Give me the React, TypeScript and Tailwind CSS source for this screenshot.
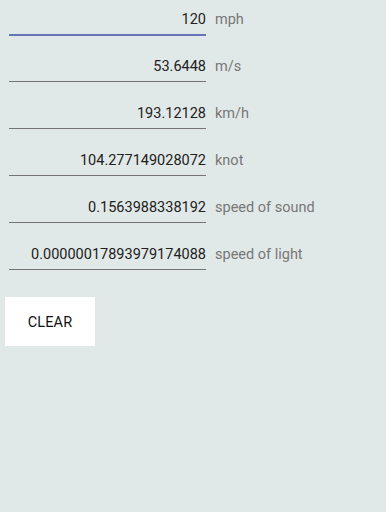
import { useState } from "react";

const units = [
    { value: "120", label: "mph", active: true },
    { value: "53.6448", label: "m/s" },
    { value: "193.12128", label: "km/h" },
    { value: "104.277149028072", label: "knot" },
    { value: "0.1563988338192", label: "speed of sound" },
    { value: "0.00000017893979174088", label: "speed of light" },
];

export default function App() {
    const [rows, setRows] = useState(units);

    return (
        <div
            className="min-h-[512px] w-full bg-[#e1e9e8] pt-[10px]"
            style={{ fontFamily: "Roboto, 'Liberation Sans', sans-serif" }}
        >
            {rows.map((row) => (
                <div key={row.label} className="flex h-[47px] items-start">
                    <div
                        className={
                            row.active
                                ? "ml-[9px] w-[197px] border-b-2 border-[#6674b8] pb-[4px] text-right text-[14.5px] leading-[20px] text-[#212121]"
                                : "ml-[9px] w-[197px] border-b border-[#747474] pb-[4px] text-right text-[14.5px] leading-[20px] text-[#212121]"
                        }
                    >
                        {row.value}
                    </div>
                    <div className="ml-[9px] text-[14.5px] leading-[20px] text-[#777777]">
                        {row.label}
                    </div>
                </div>
            ))}
            <button
                className="ml-[5px] mt-[5px] h-[49px] w-[90px] bg-white pt-[2px] text-[14.5px] font-normal tracking-[0.1px] text-[#111111]"
                onClick={() => setRows(units.map((u) => ({ ...u, value: "" })))}
            >
                CLEAR
            </button>
        </div>
    );
}
